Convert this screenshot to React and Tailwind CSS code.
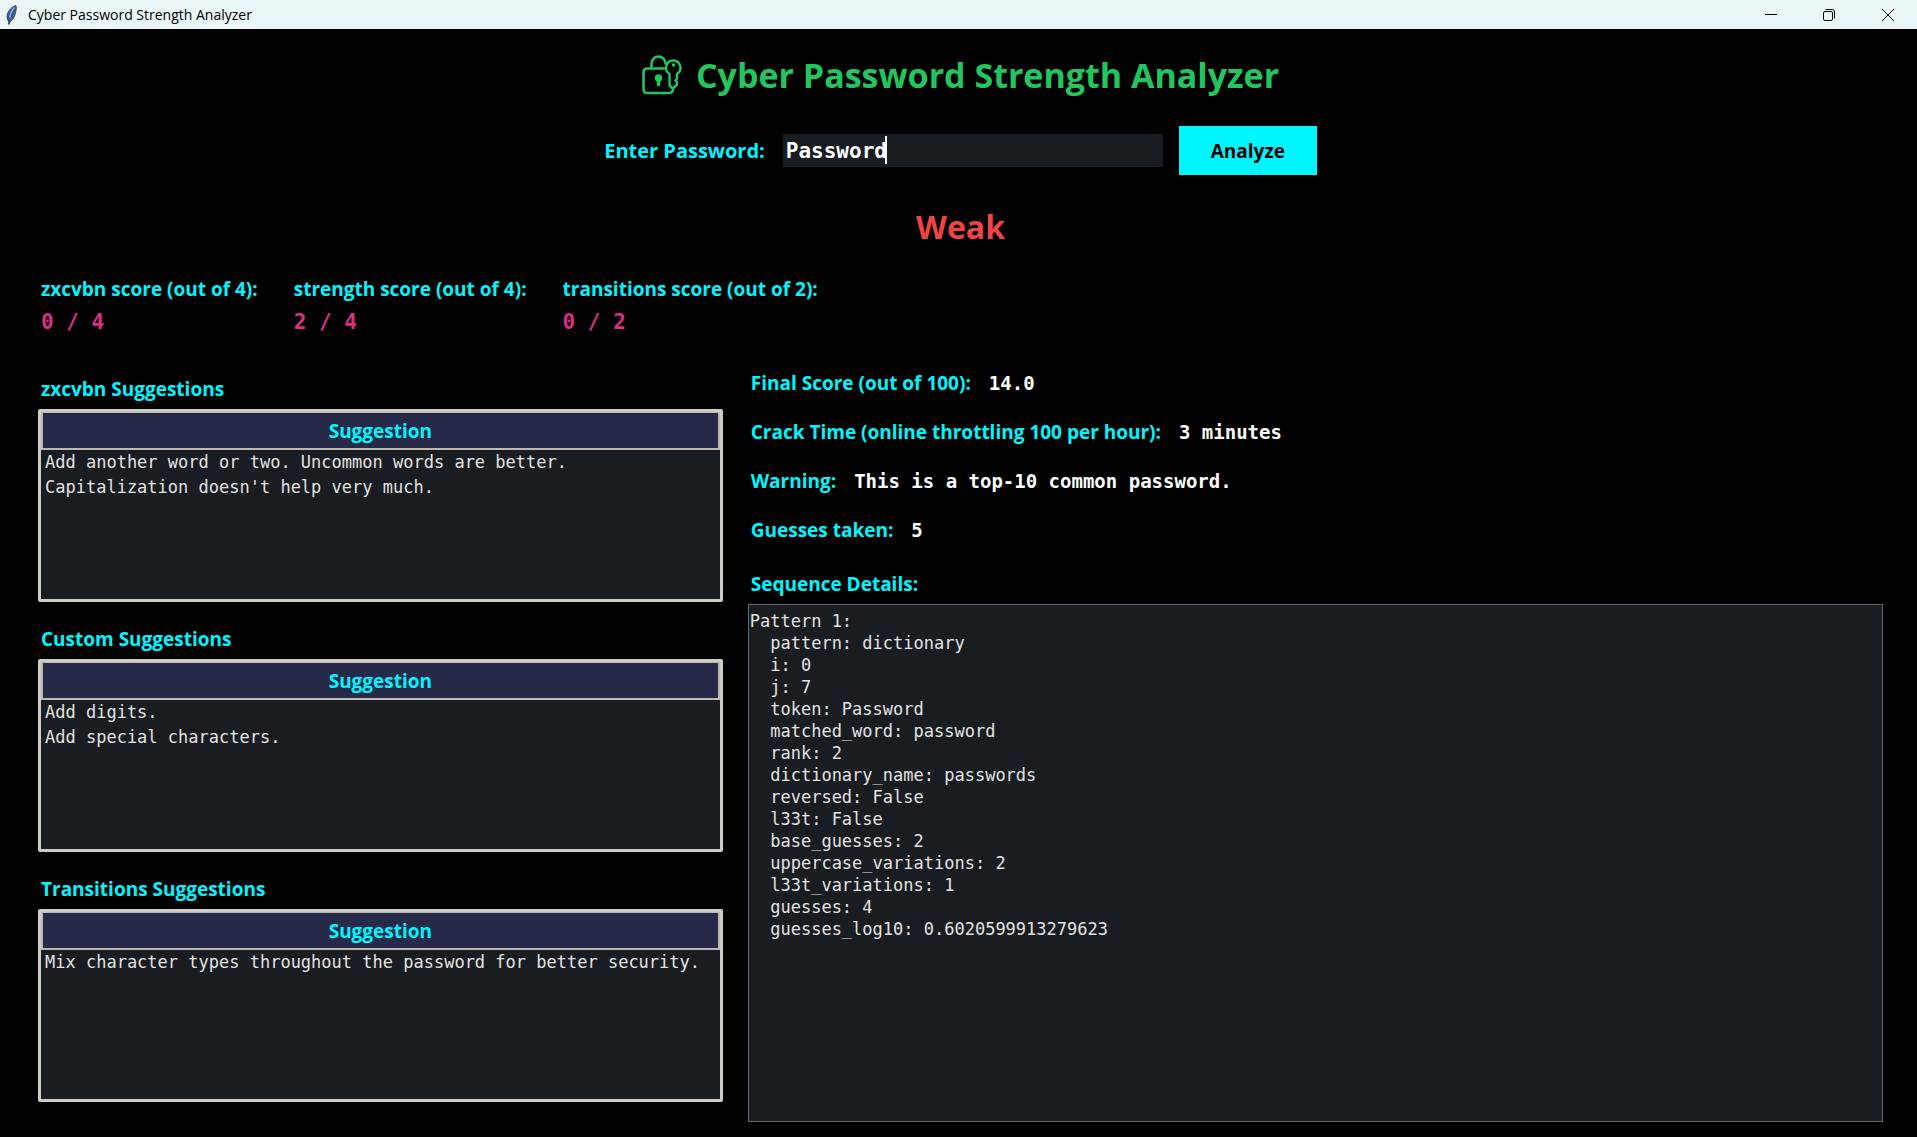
import React, { useState } from "react";

const scores = [
  { label: "zxcvbn score (out of 4):", value: "0 / 4" },
  { label: "strength score (out of 4):", value: "2 / 4" },
  { label: "transitions score (out of 2):", value: "0 / 2" },
];

const suggestionGroups = [
  {
    title: "zxcvbn Suggestions",
    rows: [
      "Add another word or two. Uncommon words are better.",
      "Capitalization doesn't help very much.",
    ],
  },
  { title: "Custom Suggestions", rows: ["Add digits.", "Add special characters."] },
  {
    title: "Transitions Suggestions",
    rows: ["Mix character types throughout the password for better security."],
  },
];

const results = [
  { label: "Final Score (out of 100):", value: "14.0" },
  { label: "Crack Time (online throttling 100 per hour):", value: "3 minutes" },
  { label: "Warning:", value: "This is a top-10 common password." },
  { label: "Guesses taken:", value: "5" },
];

const sequence = `Pattern 1:
  pattern: dictionary
  i: 0
  j: 7
  token: Password
  matched_word: password
  rank: 2
  dictionary_name: passwords
  reversed: False
  l33t: False
  base_guesses: 2
  uppercase_variations: 2
  l33t_variations: 1
  guesses: 4
  guesses_log10: 0.6020599913279623`;

function FeatherIcon() {
  return (
    <svg className="h-5 w-3" viewBox="0 0 12 20" aria-hidden="true">
      <path d="M10 0.5C6 1.500 1.500 6 1 11c0 2 .5 4 1.800 5.500L3 19.500l1-2.500C8 14 11 7 10 .5Z" fill="#2f5f9e" stroke="#4a4e55" strokeWidth="1" />
      <path d="M8.500 2.500C6 5 4 9 3.500 14" fill="none" stroke="#8fb4e0" strokeWidth="1.500" />
      <path d="M3 12v7" fill="none" stroke="#3b3f46" strokeWidth="1" />
    </svg>
  );
}

function LockKeyIcon() {
  return (
    <svg className="h-10 w-10" viewBox="0 0 40 40" fill="none" stroke="currentColor" strokeWidth="2.6" strokeLinejoin="round" strokeLinecap="round" aria-hidden="true">
      <path d="M22 13.500H5a3.500 3.500 0 0 0-3.500 3.500v17.500A3.500 3.500 0 0 0 5 38h22.500a4 4 0 0 0 3.500-3" />
      <path d="M9.500 13V8.500a7 7 0 0 1 14 0" />
      <circle cx="16.500" cy="23" r="3.700" fill="currentColor" stroke="none" />
      <path d="M16.500 24v5.500" strokeWidth="3.6" />
      <path d="M31.500 5.500a7.300 7.300 0 0 0-4 13.500v11.500l3.300 3 4-3.500v-3l-1.500-1.500 1.700-2V19a7.300 7.300 0 0 0-3.500-13.500Z" strokeWidth="2.4" />
      <circle cx="31.500" cy="10" r="1.700" fill="currentColor" stroke="none" />
    </svg>
  );
}

function SuggestionTable({ title, rows }) {
  return (
    <section>
      <h2 className="pl-[3px] text-[19px] leading-[26px] font-bold text-[#00f6ff]">{title}</h2>
      <div className="mt-[7px] h-[193px] rounded-[2px] border-3 border-[#cfccc6] bg-[#191c20]">
        <table className="w-full border-separate border-spacing-0">
          <thead>
            <tr>
              <th className="h-[38px] border-2 border-t-1 border-[#bdb8b2] bg-[#262a48] p-0 pt-px text-center text-[19px] leading-8 font-bold text-[#00f6ff]">
                Suggestion
              </th>
            </tr>
          </thead>
          <tbody>
            {rows.map((row) => (
              <tr key={row}>
                <td className="h-[25px] p-0 pl-1 font-['DejaVu_Sans_Mono',monospace] text-[17px] leading-[25px] whitespace-nowrap text-[#e3e3e3]">
                  {row}
                </td>
              </tr>
            ))}
          </tbody>
        </table>
      </div>
    </section>
  );
}

export default function App() {
  const [password, setPassword] = useState("Password");
  return (
    <div className="flex min-h-screen flex-col bg-black font-['Open_Sans',sans-serif]">
      <header className="flex h-[29px] items-center bg-[#eaf6f8] pl-1.5 text-black">
        <FeatherIcon />
        <span className="ml-2.5 text-[14px] leading-5">Cyber Password Strength Analyzer</span>
        <div className="ml-auto flex h-full">
          <button aria-label="Minimize" className="flex w-[59px] items-center justify-center">
            <svg className="size-3" viewBox="0 0 12 12" stroke="currentColor"><path d="M0 5.500h12" /></svg>
          </button>
          <button aria-label="Restore" className="flex w-[58px] items-center justify-center">
            <svg className="size-3" viewBox="0 0 12 12" fill="none" stroke="currentColor">
              <rect x="0.5" y="2.500" width="9" height="9" rx="1.500" />
              <path d="M2.500.5h6.500a2.500 2.500 0 0 1 2.500 2.500v6.500" />
            </svg>
          </button>
          <button aria-label="Close" className="flex w-[59px] items-center justify-center">
            <svg className="size-3" viewBox="0 0 12 12" stroke="currentColor"><path d="M0 0l12 12M12 0L0 12" /></svg>
          </button>
        </div>
      </header>

      <main className="flex grow flex-col pt-5 pr-[34px] pb-[15px] pl-[38px]">
        <h1 className="flex items-center justify-center gap-3.5 text-[34px] leading-[52px] font-bold text-[#22c55e]">
          <LockKeyIcon />
          Cyber Password Strength Analyzer
        </h1>

        <form className="mt-[25px] flex items-center justify-center" onSubmit={(e) => e.preventDefault()}>
          <label htmlFor="password" className="mr-[18px] text-[20px] font-bold text-[#00f6ff]">Enter Password:</label>
          <div className="relative mr-4">
            <input
              id="password"
              type="text"
              value={password}
              onChange={(e) => setPassword(e.target.value)}
              className="block h-[33px] w-[380px] bg-[#191c20] px-[3px] font-['DejaVu_Sans_Mono',monospace] text-[21px] font-bold text-white outline-none"
            />
            <span className="absolute top-0.5 left-[102px] h-7 w-0.5 bg-white" />
          </div>
          <button className="h-[49px] w-[138px] bg-[#00f6ff] pt-0.5 text-[19px] font-bold text-black">Analyze</button>
        </form>

        <p className="mt-8 text-center text-[32px] leading-10 font-bold text-[#ef4444]">Weak</p>

        <dl className="mt-[29px] flex gap-9 pl-[3px]">
          {scores.map(({ label, value }) => (
            <div key={label}>
              <dt className="text-[19px] leading-[26px] font-bold text-[#00f6ff]">{label}</dt>
              <dd className="mt-[7px] font-['DejaVu_Sans_Mono',monospace] text-[21px] leading-[26px] font-bold text-[#db2f86]">{value}</dd>
            </div>
          ))}
        </dl>

        <div className="mt-[34px] grid grow grid-cols-[38fr_63fr] gap-[25px]">
          <div className="flex flex-col gap-6 pt-[7px]">
            {suggestionGroups.map((group) => (
              <SuggestionTable key={group.title} {...group} />
            ))}
          </div>

          <div className="flex flex-col pt-px">
            <dl className="flex flex-col gap-[23px] pl-[3px]">
              {results.map(({ label, value }) => (
                <div key={label} className="flex items-center gap-[18px]">
                  <dt className="text-[19px] leading-[26px] font-bold text-[#00f6ff]">{label}</dt>
                  <dd className="font-['DejaVu_Sans_Mono',monospace] text-[19px] leading-[26px] font-bold text-white">{value}</dd>
                </div>
              ))}
            </dl>
            <h2 className="mt-7 pl-[3px] text-[19px] leading-[26px] font-bold text-[#00f6ff]">Sequence Details:</h2>
            <pre className="mt-[7px] grow border border-[#66686a] bg-[#191c20] pt-[5px] pl-px font-['DejaVu_Sans_Mono',monospace] text-[17px] leading-[22px] text-[#e3e3e3]">
              {sequence}
            </pre>
          </div>
        </div>
      </main>
    </div>
  );
}
